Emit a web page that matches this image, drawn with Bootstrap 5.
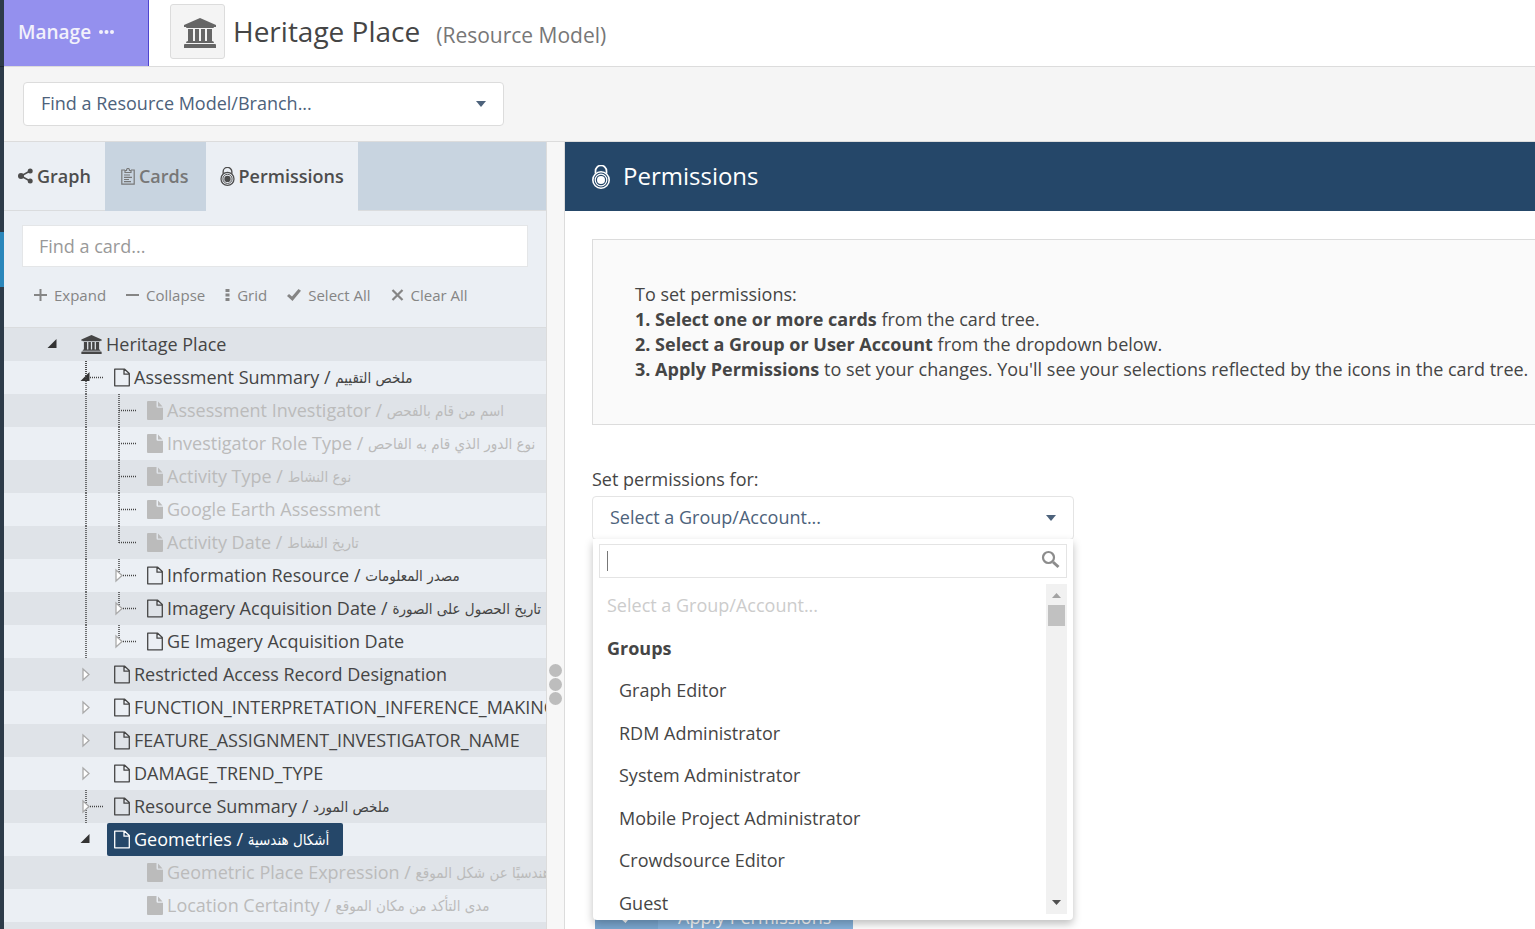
<!DOCTYPE html>
<html lang="en">
<head>
<meta charset="utf-8">
<meta name="viewport" content="width=device-width, initial-scale=1">
<title>Heritage Place - Permissions</title>
<link href="https://cdn.jsdelivr.net/npm/bootstrap@5.3.0/dist/css/bootstrap.min.css" rel="stylesheet">
<style>
:root { --ink:#454545; --line:#dcdcdc; --navy:#254769; --panel:#ebeff4; --stripe:#dfe3e8; }
body { font-family:"Open Sans","DejaVu Sans",sans-serif; font-size:18px; line-height:26px; color:var(--ink); background:#fff; }
a { color:inherit; text-decoration:none; }
svg { display:block; flex:none; }
.rail { width:4px; background:#2d3b49; }
.rail-gap { height:232px; background:linear-gradient(#1c2630,#1c2630) 0 66px/100% 1px no-repeat; }
.rail-active { height:55px; background:#2b87bb; }
.manage { width:145px; background:#9490ee; border-right:1px solid #4f45cf; color:#f2f1fb; font-size:19px; font-weight:600; padding:0 14px 2px; }
.topbar { height:67px; border-bottom:1px solid var(--line); }
.model { padding:0 0 4px 21px; }
.model-icon { width:55px; height:55px; background:#f4f4f4; border:1px solid var(--line); border-radius:3px; color:#666; }
.model-name { font-size:28px; line-height:36px; }
.model-kind { font-size:21px; color:#777; padding:8px 0 0; }
.finder { background:#f5f5f5; border-bottom:1px solid var(--line); padding:15px 19px; }
.picker { width:481px; height:44px; padding:0 17px 2px; font-size:18px; color:#4d627b; border:1px solid var(--line); border-radius:4px;
  background:#fff url("data:image/svg+xml,%3Csvg xmlns='http://www.w3.org/2000/svg' width='10' height='6'%3E%3Cpath fill='%234d627b' d='M0 0h10L5 6z'/%3E%3C/svg%3E") right 17px center/10px 6px no-repeat; }
.side { width:542px; background:var(--panel); }
.tabs { height:69px; background:#c8d4e0; font-weight:600; color:#4d4d4d; border-bottom:1px solid #dadcde; margin-bottom:-1px; }
.tabs a { gap:4px; padding:0 14px; height:69px; background:var(--panel); border-bottom:1px solid #dadcde; }
.tabs a.muted { background:none; color:#777; border-bottom-color:#c8d4e0; padding:0 17px 0 16px; }
.tabs a.current { border-bottom-color:var(--panel); }
.card-search { height:42px; margin:15px 18px 0; width:auto; border:1px solid #e4e6e8; border-radius:0; padding:0 16px; font-size:18px; }
.card-search::placeholder { color:#999; opacity:1; }
.tools { height:61px; padding:0 0 4px 30px; font-size:15px; color:#858585; border-bottom:1px solid #dadcde; }
.tools button { border:0; background:none; padding:0; color:inherit; display:flex; align-items:center; gap:7px; }
.tools button + button { margin-left:20px; }
.tree-row { height:33px; padding-left:33px; white-space:nowrap; }
.tree-row:nth-child(odd) { background:var(--stripe); }
.tree-row a { display:flex; align-items:center; gap:4px; height:33px; margin-left:4px; padding:0 14px 1px 7px; border-radius:2px; }
.tree-row .off { color:#bbb; }
.tree-row .picked { background:var(--navy); color:#fff; }
.ar { font-family:"DejaVu Sans Condensed","DejaVu Sans",sans-serif; font-size:15px; line-height:20px; vertical-align:1px; }
.splitter { width:19px; background:#f7f7f7; border:solid var(--line); border-width:0 1px; gap:1px; padding-top:522px; }
.splitter i { width:13px; height:13px; border-radius:50%; background:#bdbdbd; }
.page-head { height:69px; background:var(--navy); color:#fff; padding-left:27px; font-size:24px; gap:13px; }
.page-body { padding:28px 0 0 27px; }
.steps { background:#fafafa; border:1px solid var(--line); border-right:0; line-height:25px; padding:42px 0 42px 42px; white-space:nowrap; margin-bottom:41px; }
.chooser { width:482px; }
.chooser .picker { width:100%; border-color:#e4e4e4; background-position-x:right 18px; }
.drop { top:43px; left:1px; width:480px; background:#fff; border-radius:0 0 4px 4px; box-shadow:0 4px 8px rgba(0,0,0,.25); padding:5px 6px 6px; }
.drop-search input { height:34px; border:1px solid #e4e4e4; border-radius:0; background:linear-gradient(#777,#777) 7px 6px/1px 20px no-repeat #fff; }
.drop-search svg { right:7px; top:6px; }
.options { height:330px; margin-top:6px; }
.options ul { height:340px; }
.options li { padding-left:20px; }
.options .hint { color:#ccc; padding-left:8px; }
.options .group { font-weight:700; padding-left:8px; }
.bar { width:21px; background:#f1f1f1; color:#505050; padding:9px 0; }
.bar i { width:17px; height:21px; background:#c1c1c1; margin-top:7px; }
.apply { width:258px; height:42px; margin:356px 0 0 3px; background:#87b3dc; color:#fff; border:0; padding:0; gap:20px; }
.apply .tick { width:63px; height:42px; background:#7ba7d0; }
</style>
</head>
<body class="vh-100 overflow-hidden d-flex">
<svg width="0" height="0" class="position-absolute" aria-hidden="true">
  <symbol id="bank" viewBox="0 0 32 30"><path fill="currentColor" d="M16 0 32 7v2h-2q0 1-1 1H3q-1 0-1-1H0V7zM4 11h5v12h2V11h4v12h2V11h4v12h2V11h5v12q2 0 2 2H2q0-2 2-2zM1 26h30q1 0 1 1v3H0v-3q0-1 1-1z"/></symbol>
  <symbol id="page" viewBox="0 0 16 19"><path fill="none" stroke="currentColor" stroke-width="1.3" stroke-linejoin="round" d="M.7 1.2h10L15.300 5.500V17.800H.7zM10 1.200V6.200h5.300"/></symbol>
  <symbol id="page-full" viewBox="0 0 16 19"><path fill="currentColor" d="M1 0h8.500v5.500q0 1.200 1.200 1.200H16V18q0 1-1 1H1q-1 0-1-1V1q0-1 1-1zM11 .5 15.500 5.500H11z"/></symbol>
  <symbol id="lock" viewBox="0 0 18 24"><g fill="none" stroke="currentColor"><path stroke-width="1.700" d="M3.500 8.500V6a5.500 5.500 0 0 1 11 0v2.500"/><circle cx="9" cy="15" r="8.200" stroke-width="1.600"/><circle cx="9" cy="15" r="5.800" stroke-width="1.200"/></g><circle cx="9" cy="15" r="4" fill="currentColor"/></symbol>
  <symbol id="check" viewBox="0 0 14 12"><path fill="currentColor" d="M0 7 2 5l3 2.500L11.500 0 14 1.800 5.500 12z"/></symbol>
  <symbol id="vline" viewBox="0 0 33 33"><path d="M16 0v33" stroke="#444" stroke-width="1.500" stroke-dasharray="1 1"/></symbol>
  <symbol id="tee" viewBox="0 0 33 33"><path d="M16 0v33M16 16.500h17" fill="none" stroke="#444" stroke-width="1.500" stroke-dasharray="1 1"/></symbol>
  <symbol id="elbow" viewBox="0 0 33 33"><path d="M16 0v17M16 16.500h17" fill="none" stroke="#444" stroke-width="1.500" stroke-dasharray="1 1"/></symbol>
  <symbol id="opened" viewBox="0 0 33 33"><path d="M19.500 11v9h-9z" fill="#333"/></symbol>
  <symbol id="closed" viewBox="0 0 33 33"><path d="M13 11v11l6-5.500z" fill="#fff" stroke="#aaa" stroke-width="1.300"/></symbol>
</svg>

<nav class="rail flex-shrink-0"><div class="rail-gap"></div><div class="rail-active"></div></nav>

<div class="flex-grow-1 d-flex flex-column" style="min-width:0">
  <header class="topbar d-flex flex-shrink-0">
    <a href="#" class="manage d-flex align-items-center gap-2">Manage
      <svg width="15" height="4" viewBox="0 0 15 4" fill="currentColor"><circle cx="2" cy="2" r="2"/><circle cx="7.500" cy="2" r="2"/><circle cx="13" cy="2" r="2"/></svg></a>
    <div class="model d-flex align-items-center">
      <div class="model-icon d-flex align-items-center justify-content-center ps-1 pt-1"><svg width="32" height="30"><use href="#bank"/></svg></div>
      <h1 class="model-name fw-normal ms-2 mb-0">Heritage Place</h1>
      <span class="model-kind ms-3">(Resource Model)</span>
    </div>
  </header>

  <div class="finder flex-shrink-0">
    <select class="form-select picker" aria-label="Resource model or branch"><option>Find a Resource Model/Branch...</option></select>
  </div>

  <div class="d-flex flex-grow-1" style="min-height:0">
    <aside class="side flex-shrink-0 overflow-hidden">
      <nav class="tabs d-flex">
        <a href="#" class="d-flex align-items-center"><svg width="15" height="16" viewBox="0 0 15 16"><path d="M12 3 3 8l9 5" fill="none" stroke="currentColor" stroke-width="1.500"/><g fill="currentColor"><circle cx="12.200" cy="3" r="2.500"/><circle cx="3" cy="8" r="3"/><circle cx="12.200" cy="13" r="2.500"/></g></svg>Graph</a>
        <a href="#" class="muted d-flex align-items-center"><svg width="14" height="17" viewBox="0 0 14 17"><g fill="none" stroke="currentColor" stroke-width="1.200"><path d="M4 2H.8v14.200h12.400V2H10M4 4.500V2.500h1.500q0-2 1.500-2t1.500 2H10v2zM3 7h6M3 9.300h8M3 11.500h5M3 13.700h7"/></g></svg>Cards</a>
        <a href="#" class="current d-flex align-items-center"><svg width="15" height="19"><use href="#lock"/></svg>Permissions</a>
      </nav>
      <div class="d-flex flex-column">
        <input type="text" class="form-control card-search" placeholder="Find a card..." aria-label="Find a card">
      </div>
      <div class="tools d-flex align-items-center">
        <button type="button"><svg width="13" height="12" viewBox="0 0 13 12"><path d="M6.500 0v12M0 6h13" stroke="currentColor" stroke-width="2"/></svg>Expand</button>
        <button type="button"><svg width="13" height="12" viewBox="0 0 13 12"><path d="M0 6h13" stroke="currentColor" stroke-width="2"/></svg>Collapse</button>
        <button type="button"><svg width="5" height="12" viewBox="0 0 5 12"><path d="M2.500 0v3m0 1.500v3m0 1.500v3" stroke="currentColor" stroke-width="4"/></svg>Grid</button>
        <button type="button"><svg width="14" height="12"><use href="#check"/></svg>Select All</button>
        <button type="button"><svg width="13" height="12" viewBox="0 0 13 12"><path d="m1.500 1 10 10m0-10-10 10" stroke="currentColor" stroke-width="2.200"/></svg>Clear All</button>
      </div>
      <ul class="list-unstyled mb-0" id="tree"></ul>
    </aside>

    <div class="splitter flex-shrink-0 d-flex flex-column align-items-center"><i></i><i></i><i></i></div>

    <main class="flex-grow-1 overflow-hidden">
      <h2 class="page-head d-flex align-items-center fw-normal mb-0"><svg width="18" height="24"><use href="#lock"/></svg>Permissions</h2>
      <div class="page-body">
        <div class="steps">
          <div>To set permissions:</div>
          <div><b>1. Select one or more cards</b> from the card tree.</div>
          <div><b>2. Select a Group or User Account</b> from the dropdown below.</div>
          <div><b>3. Apply Permissions</b> to set your changes. You'll see your selections reflected by the icons in the card tree.</div>
        </div>
        <label for="account" class="d-block pb-1">Set permissions for:</label>
        <div class="chooser position-relative">
          <select id="account" class="form-select picker"><option>Select a Group/Account...</option></select>
          <div class="drop position-absolute">
            <div class="drop-search position-relative">
              <input type="text" class="form-control" aria-label="Search groups and accounts">
              <svg class="position-absolute" width="19" height="19" viewBox="0 0 19 19" fill="none" stroke="#8c8c8c"><circle cx="7.500" cy="7.500" r="5.500" stroke-width="2.200"/><path d="m12 12 5.500 5" stroke-width="3"/></svg>
            </div>
            <div class="options d-flex overflow-hidden">
              <ul class="list-unstyled flex-grow-1 d-flex flex-column mb-0" id="options">
                <li class="hint">Select a Group/Account...</li>
                <li class="group">Groups</li>
                <li>Graph Editor</li>
                <li>RDM Administrator</li>
                <li>System Administrator</li>
                <li>Mobile Project Administrator</li>
                <li>Crowdsource Editor</li>
                <li>Guest</li>
              </ul>
              <div class="bar d-flex flex-column align-items-center">
                <svg width="9" height="5" viewBox="0 0 9 5"><path d="M0 5 4.500 0 9 5z" fill="#a3a3a3"/></svg>
                <i></i>
                <svg class="mt-auto" width="9" height="5" viewBox="0 0 9 5"><path d="M0 0h9L4.500 5z" fill="#505050"/></svg>
              </div>
            </div>
          </div>
        </div>
        <button type="button" class="apply d-flex align-items-center"><span class="tick d-flex align-items-center justify-content-center"><svg width="14" height="12"><use href="#check"/></svg></span>Apply Permissions</button>
      </div>
    </main>
  </div>
</div>

<script>
// Each row: guide cells, icon, label, Arabic label, state.
const rows = [
  ['opened', 'bank', 'Heritage Place'],
  ['- elbow+opened+vline', 'page', 'Assessment Summary', 'ملخص التقييم'],
  ['- vline tee', 'page-full', 'Assessment Investigator', 'اسم من قام بالفحص', 'off'],
  ['- vline tee', 'page-full', 'Investigator Role Type', 'نوع الدور الذي قام به الفاحص', 'off'],
  ['- vline tee', 'page-full', 'Activity Type', 'نوع النشاط', 'off'],
  ['- vline tee', 'page-full', 'Google Earth Assessment', '', 'off'],
  ['- vline elbow', 'page-full', 'Activity Date', 'تاريخ النشاط', 'off'],
  ['- vline elbow+closed', 'page', 'Information Resource', 'مصدر المعلومات'],
  ['- vline elbow+closed', 'page', 'Imagery Acquisition Date', 'تاريخ الحصول على الصورة'],
  ['- vline elbow+closed', 'page', 'GE Imagery Acquisition Date'],
  ['- closed', 'page', 'Restricted Access Record Designation'],
  ['- closed', 'page', 'FUNCTION_INTERPRETATION_INFERENCE_MAKING'],
  ['- closed', 'page', 'FEATURE_ASSIGNMENT_INVESTIGATOR_NAME'],
  ['- closed', 'page', 'DAMAGE_TREND_TYPE'],
  ['- tee+closed', 'page', 'Resource Summary', 'ملخص المورد'],
  ['- opened', 'page', 'Geometries', 'أشكال هندسية', 'picked'],
  ['- - -', 'page-full', 'Geometric Place Expression', 'هندسيًا عن شكل الموقع', 'off'],
  ['- - -', 'page-full', 'Location Certainty', 'مدى التأكد من مكان الموقع', 'off'],
  ['-', '', '']
];
const cell = c => '<svg width="33" height="33">' + (c === '-' ? '' : c.split('+').map(n => `<use href="#${n}"/>`).join('')) + '</svg>';
document.getElementById('tree').innerHTML = rows.map(([cells, icon, text, ar, state]) =>
  `<li class="tree-row d-flex">${cells.split(' ').map(cell).join('')}` + (text ?
  `<a href="#" class="${state || ''}"><svg width="${icon === 'bank' ? 21 : 16}" height="19"><use href="#${icon}"/></svg><span>${text}${ar ? ` / <span class="ar" lang="ar" dir="rtl">${ar}</span>` : ''}</span></a>` : '') + '</li>').join('');
document.querySelectorAll('#options li').forEach(li => li.classList.add('d-flex', 'align-items-center', 'flex-fill'));
</script>
<script src="https://cdn.jsdelivr.net/npm/bootstrap@5.3.0/dist/js/bootstrap.bundle.min.js"></script>
</body>
</html>
